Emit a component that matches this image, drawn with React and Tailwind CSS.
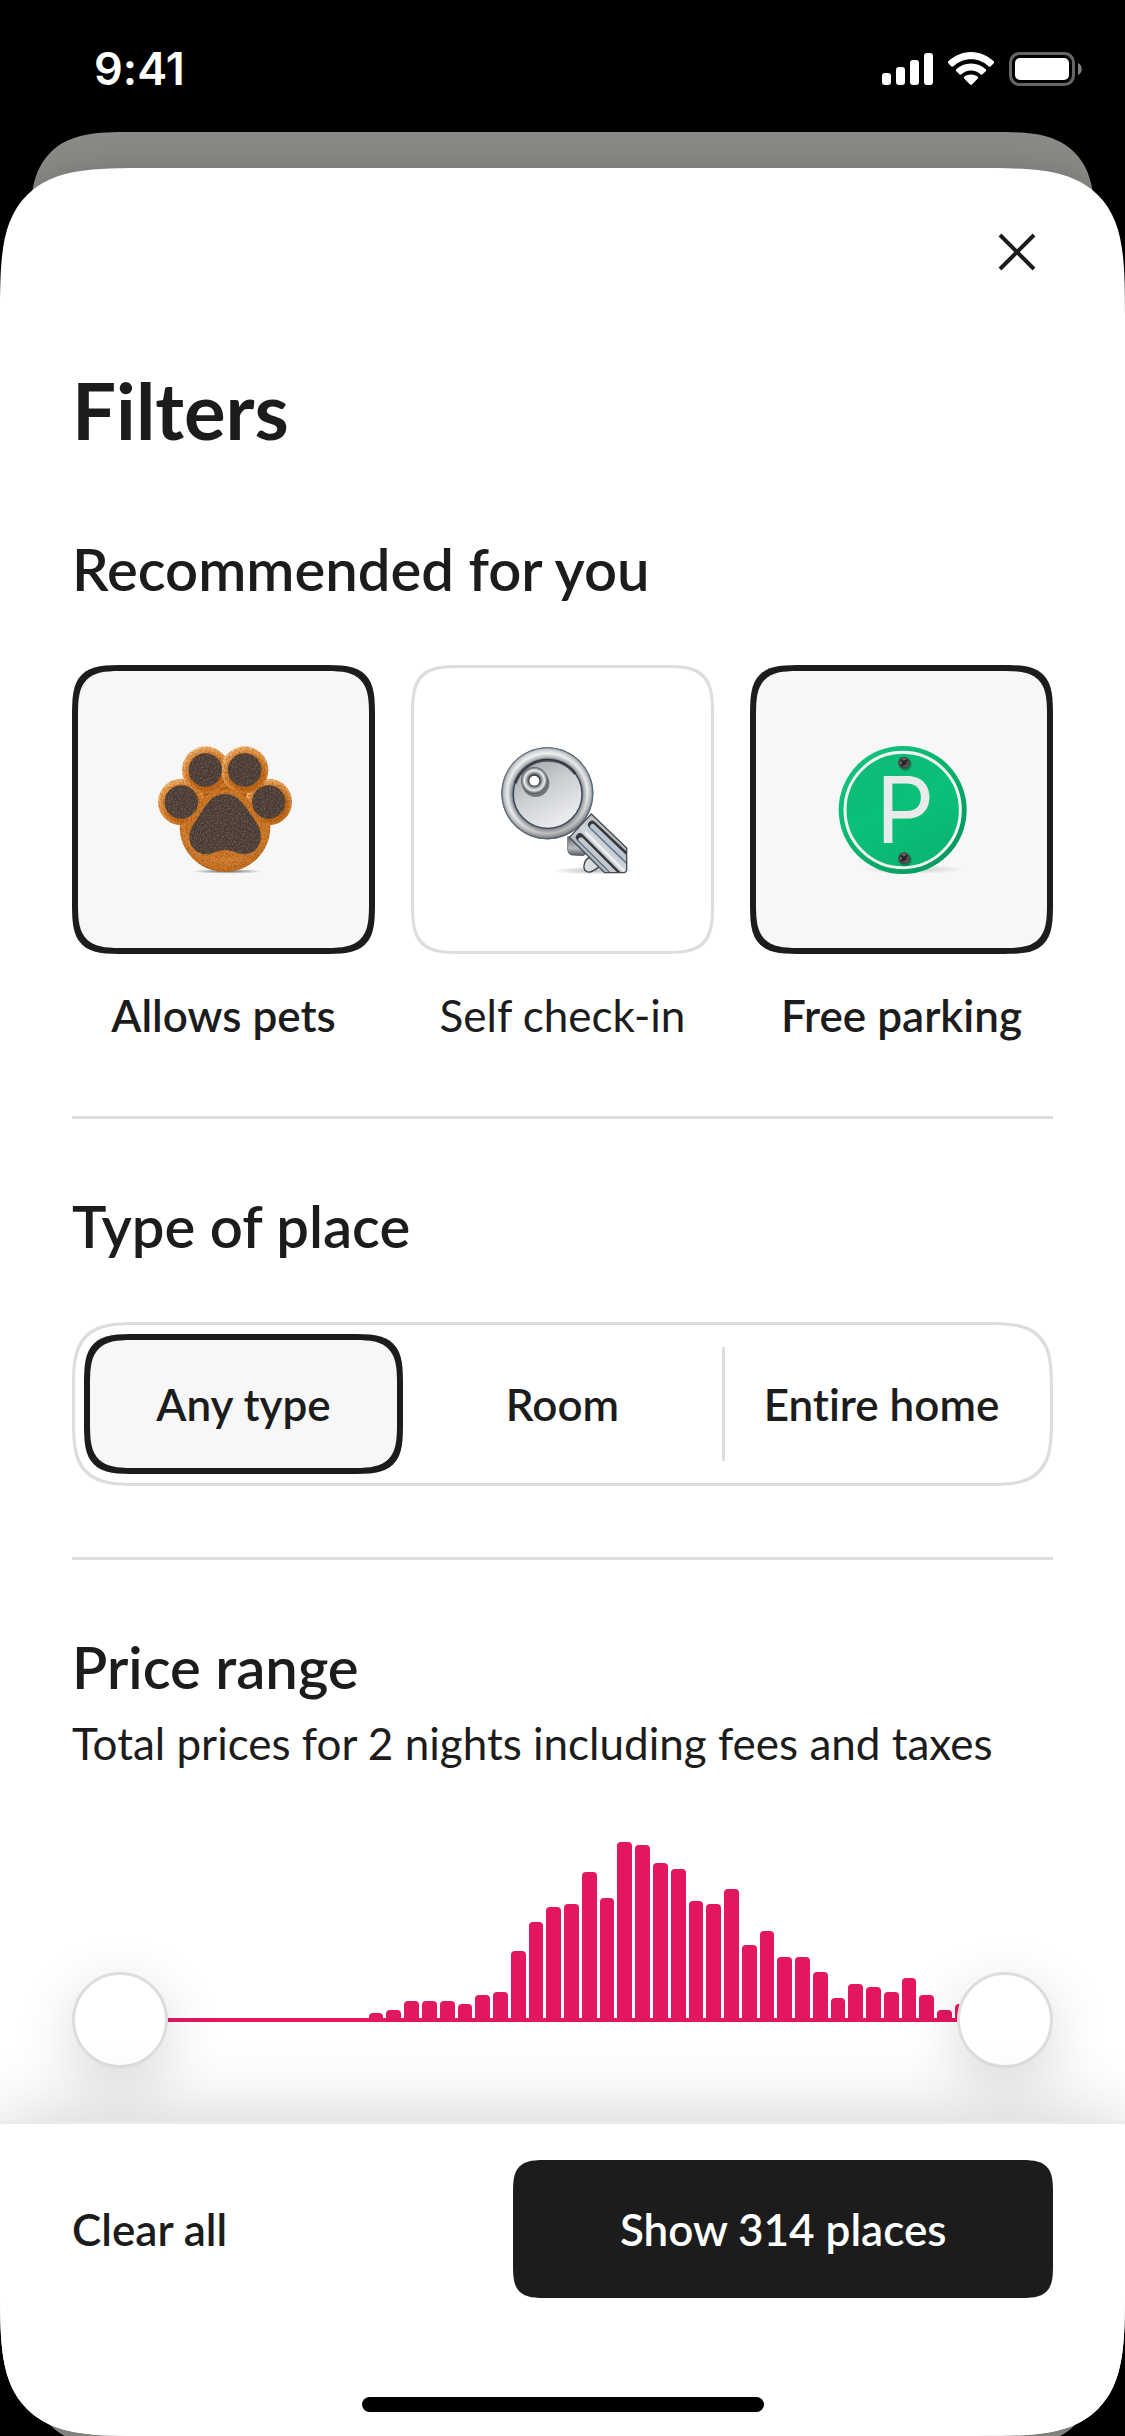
import React, { useState } from "react";
import clsx from "clsx";

const BARS = [
  0, 0, 0, 0, 0, 0, 0, 0, 0, 0, 0, 0, 0, 0,
  9, 12, 21, 21, 21, 18, 27, 30, 71, 100, 115, 118, 150, 124, 180, 177,
  159, 153, 121, 118, 133, 77, 91, 65, 65, 50, 24, 38, 35, 30, 44, 27, 12, 18,
  0, 0,
];

function PawIcon() {
  return (
    <svg viewBox="274 264 432 432" className="size-36" aria-hidden="true">
      <defs>
        <radialGradient id="toe" cx="0.54" cy="0.58" r="0.58">
          <stop offset="0.6" stopColor="#c26a1a" />
          <stop offset="0.8" stopColor="#e39343" />
          <stop offset="1" stopColor="#f8c07c" />
        </radialGradient>
        <radialGradient id="palm" cx="0.48" cy="0.42" r="0.6">
          <stop offset="0.3" stopColor="#b5610f" />
          <stop offset="0.75" stopColor="#d88535" />
          <stop offset="1" stopColor="#c26e20" />
        </radialGradient>
        <radialGradient id="pawShadow">
          <stop offset="0" stopColor="#3d4a52" stopOpacity="0.8" />
          <stop offset="1" stopColor="#3d4a52" stopOpacity="0" />
        </radialGradient>
        <filter id="fur" x="0" y="0" width="1" height="1" colorInterpolationFilters="sRGB">
          <feTurbulence type="fractalNoise" baseFrequency="0.2" numOctaves="2" seed="4" />
          <feColorMatrix values="0 0 0 0 0.4  0 0 0 0 0.17  0 0 0 0 0  1.2 0 0 0 -0.52" result="n" />
          <feComposite in="n" in2="SourceGraphic" operator="in" result="g" />
          <feMerge>
            <feMergeNode in="SourceGraphic" />
            <feMergeNode in="g" />
          </feMerge>
        </filter>
        <filter id="pad" x="0" y="0" width="1" height="1" colorInterpolationFilters="sRGB">
          <feTurbulence type="fractalNoise" baseFrequency="0.22" numOctaves="2" seed="9" />
          <feColorMatrix values="0 0 0 0 0.56  0 0 0 0 0.48  0 0 0 0 0.43  1.4 0 0 0 -0.56" result="n" />
          <feComposite in="n" in2="SourceGraphic" operator="in" result="g" />
          <feMerge>
            <feMergeNode in="SourceGraphic" />
            <feMergeNode in="g" />
          </feMerge>
        </filter>
      </defs>
      <ellipse cx="500" cy="664" rx="105" ry="7" fill="url(#pawShadow)" />
      <g filter="url(#fur)">
        <circle cx="493" cy="530" r="136" fill="url(#palm)" />
        <path d="M400 440L440 410H550L590 440L610 500L380 500Z" fill="#b5600f" />
        <circle cx="362" cy="456" r="70" fill="url(#toe)" />
        <circle cx="624" cy="456" r="70" fill="url(#toe)" />
        <circle cx="435" cy="360" r="71" fill="url(#toe)" />
        <circle cx="552" cy="360" r="71" fill="url(#toe)" />
        <path d="M372 536C385 470 440 418 493 418S600 470 615 536L560 620H430Z" fill="#cf7b29" />
      </g>
      <g fill="#463932" filter="url(#pad)">
        <circle cx="434" cy="360" r="50" />
        <circle cx="552" cy="360" r="50" />
        <circle cx="362" cy="456" r="50" />
        <circle cx="624" cy="456" r="50" />
        <path d="M493 432C522 432 540 450 556 472L588 520C612 556 600 604 560 612C534 616 520 600 493 600S454 616 428 612C388 604 374 560 398 524L430 474C446 450 464 432 493 432Z" />
      </g>
    </svg>
  );
}

function KeyIcon() {
  return (
    <svg viewBox="271 264 432 432" className="size-36" aria-hidden="true">
      <defs>
        <radialGradient id="ring" cx="440" cy="430" r="138" gradientUnits="userSpaceOnUse">
          <stop offset="0.74" stopColor="#4b5058" />
          <stop offset="0.79" stopColor="#a5a9af" />
          <stop offset="0.87" stopColor="#f4f5f7" />
          <stop offset="0.95" stopColor="#b9bdc2" />
          <stop offset="1" stopColor="#4d545c" />
        </radialGradient>
        <linearGradient id="ringShade" x1="0.3" y1="0" x2="0.6" y2="1">
          <stop offset="0" stopColor="#fff" stopOpacity="0.35" />
          <stop offset="0.6" stopColor="#888" stopOpacity="0.06" />
          <stop offset="1" stopColor="#222" stopOpacity="0.35" />
        </linearGradient>
        <linearGradient id="disc" x1="0.2" y1="0" x2="0.75" y2="1">
          <stop offset="0" stopColor="#a3a7ac" />
          <stop offset="0.45" stopColor="#cdd0d3" />
          <stop offset="1" stopColor="#eff0f2" />
        </linearGradient>
        <radialGradient id="eye">
          <stop offset="0.38" stopColor="#2c2f34" />
          <stop offset="0.55" stopColor="#8e9298" />
          <stop offset="0.75" stopColor="#eceef0" />
          <stop offset="1" stopColor="#4c5158" />
        </radialGradient>
        <linearGradient id="blade" x1="0" y1="1" x2="1" y2="0">
          <stop offset="0" stopColor="#7f858c" />
          <stop offset="0.5" stopColor="#d3d6d9" />
          <stop offset="1" stopColor="#8a929b" />
        </linearGradient>
        <linearGradient id="tooth" x1="0" y1="0" x2="0" y2="1">
          <stop offset="0" stopColor="#686c71" />
          <stop offset="0.6" stopColor="#b9bcc0" />
          <stop offset="1" stopColor="#55595e" />
        </linearGradient>
        <radialGradient id="keyShadow">
          <stop offset="0" stopColor="#555" stopOpacity="0.4" />
          <stop offset="1" stopColor="#555" stopOpacity="0" />
        </radialGradient>
        <clipPath id="bladeClip">
          <path d="M572 492L678 594V658Q678 668 668 668H612L506 562Z" />
        </clipPath>
      </defs>
      <ellipse cx="580" cy="662" rx="125" ry="12" fill="url(#keyShadow)" />
      <path d="M501 560V600Q502 612 512 615L548 617L562 606L530 560Z" fill="url(#tooth)" stroke="#4a4e53" strokeWidth="2" />
      <path d="M566 622C552 628 546 648 552 660Q562 672 578 662L598 650Z" fill="#d9dbdd" stroke="#3f4347" strokeWidth="4" />
      <path d="M572 492L678 594V658Q678 668 668 668H612L506 562Z" fill="url(#blade)" />
      <g clipPath="url(#bladeClip)" strokeLinecap="round">
        <path d="M574 524L700 642" stroke="#33383e" strokeWidth="24" />
        <path d="M576 530L700 648" stroke="#bfc4ca" strokeWidth="16" />
        <path d="M568 534L690 652" stroke="#55779a" strokeWidth="4" />
        <path d="M538 562L660 684" stroke="#33383e" strokeWidth="24" />
        <path d="M541 570L660 689" stroke="#c4c8cd" strokeWidth="16" />
        <path d="M533 573L650 690" stroke="#55779a" strokeWidth="4" />
        <path d="M556 548L680 672" stroke="#eef0f2" strokeWidth="7" />
      </g>
      <path d="M572 492L678 594V658Q678 668 668 668H612L506 562Z" fill="none" stroke="#444b53" strokeWidth="4" strokeLinejoin="round" />
      <circle cx="440" cy="430" r="138" fill="url(#ring)" />
      <circle cx="440" cy="430" r="137" fill="url(#ringShade)" stroke="#48617c" strokeWidth="2" />
      <circle cx="441" cy="432" r="103" fill="url(#disc)" stroke="#3c4b5b" strokeWidth="4" />
      <path d="M344 400A103 103 0 0 1 524 372" fill="none" stroke="#2b2e33" strokeWidth="9" strokeOpacity="0.7" />
      <circle cx="405" cy="400" r="41" fill="#26292d" fillOpacity="0.55" />
      <circle cx="401" cy="391" r="40" fill="url(#eye)" />
      <circle cx="401" cy="392" r="15" fill="#fff" />
    </svg>
  );
}

function Screw({ y }) {
  return (
    <g>
      <circle cx="524" cy={y + 5} r="19" fill="#04522f" fillOpacity="0.5" />
      <circle cx="520" cy={y} r="18" fill="#4c4649" />
      <path d={`M511 ${y - 7}L529 ${y + 8}M528 ${y - 9}L513 ${y + 9}`} stroke="#1f1b1e" strokeWidth="5" />
      <path d={`M507 ${y + 2}L513 ${y - 3}M524 ${y + 11}L530 ${y + 4}M517 ${y - 12}L524 ${y - 10}`} stroke="#9a9197" strokeWidth="3" />
    </g>
  );
}

function ParkingIcon() {
  return (
    <svg viewBox="298 264 432 432" className="size-36" aria-hidden="true">
      <defs>
        <linearGradient id="sign" x1="0" y1="0" x2="1" y2="1">
          <stop offset="0" stopColor="#16c884" />
          <stop offset="0.5" stopColor="#06b26c" />
          <stop offset="1" stopColor="#04905a" />
        </linearGradient>
        <linearGradient id="signFace" x1="0.2" y1="0" x2="0.7" y2="1">
          <stop offset="0" stopColor="#0fba76" />
          <stop offset="0.5" stopColor="#0ac078" />
          <stop offset="1" stopColor="#0ab470" />
        </linearGradient>
        <radialGradient id="signShadow">
          <stop offset="0" stopColor="#777" stopOpacity="0.35" />
          <stop offset="1" stopColor="#777" stopOpacity="0" />
        </radialGradient>
      </defs>
      <ellipse cx="545" cy="658" rx="160" ry="14" fill="url(#signShadow)" />
      <circle cx="516" cy="480" r="192" fill="url(#sign)" />
      <circle cx="516" cy="480" r="173" fill="url(#signFace)" stroke="#f1f6f3" strokeWidth="9" />
      <text x="435" y="580" fontFamily="Inter, sans-serif" fontSize="275" fill="#e9ebea">P</text>
      <Screw y={338} />
      <Screw y={625} />
    </svg>
  );
}

function StatusBar() {
  return (
    <header className="flex h-[138px] items-center justify-between pr-[43px] pl-[94px]">
      <time className="font-[Inter,sans-serif] text-[45px] leading-[52px] font-semibold text-white">9:41</time>
      <div className="flex items-center">
        <svg viewBox="0 0 52 34" className="mr-[14px] h-[34px] w-[52px]" fill="#fff" aria-label="Signal">
          <rect x="0" y="21" width="9" height="12" rx="3" />
          <rect x="14" y="15" width="9" height="18" rx="3" />
          <rect x="28" y="8" width="9" height="25" rx="3" />
          <rect x="42" y="1" width="9" height="32" rx="3" />
        </svg>
        <svg viewBox="0 0 46 34" className="mr-[15px] h-[34px] w-[46px]" fill="#fff" aria-label="Wi-Fi">
          <path d="M23 0C32 0 40 4 46 9.500Q46.500 10.500 45.500 11.500L42.500 14.500Q41.500 15 40.500 14.300C36 10 30 7.300 23 7.300S10 10 5.500 14.300Q4.500 15 3.500 14.500L.5 11.500Q-.5 10.500 0 9.500C6 4 14 0 23 0Z" />
          <path d="M23 11.500C29 11.500 34 13.800 38 17.500Q38.500 18.500 37.700 19.300L34.300 22.500Q33.300 23 32.500 22.300C30 20 27 18.500 23 18.500S16 20 13.500 22.300Q12.700 23 11.700 22.500L8.300 19.300Q7.500 18.500 8 17.500C12 13.800 17 11.500 23 11.500Z" />
          <path d="M23 22.500C26 22.500 28.500 23.700 30 25Q30.500 25.800 29.800 26.600L24 32.500Q23 33.200 22 32.500L16.200 26.600Q15.500 25.800 16 25C17.500 23.700 20 22.500 23 22.500Z" />
        </svg>
        <svg viewBox="0 0 73 34" className="h-[34px] w-[73px]" aria-label="Battery">
          <rect x="1.500" y="1.500" width="63" height="31" rx="9" fill="none" stroke="#666" strokeWidth="3" />
          <rect x="6" y="6" width="54" height="22" rx="5" fill="#fff" />
          <path d="M69 11C74 13 74 21 69 23Z" fill="#808080" />
        </svg>
      </div>
    </header>
  );
}

const SECTION_TITLE = "text-[58px] leading-[70px] font-semibold";
const THUMB =
  "pointer-events-none absolute inset-0 m-0 h-full w-full appearance-none bg-transparent [&::-webkit-slider-thumb]:pointer-events-auto [&::-webkit-slider-thumb]:size-24 [&::-webkit-slider-thumb]:appearance-none [&::-webkit-slider-thumb]:rounded-full [&::-webkit-slider-thumb]:border-3 [&::-webkit-slider-thumb]:border-[#dddddd] [&::-webkit-slider-thumb]:bg-white [&::-webkit-slider-thumb]:shadow-[0_18px_60px_rgba(0,0,0,0.16)]";

function RecommendedOption({ label, Icon, checked, onChange }) {
  return (
    <label className="flex cursor-pointer flex-col items-center gap-8">
      <input type="checkbox" className="sr-only" checked={checked} onChange={onChange} />
      <span
        className={clsx(
          "flex h-[289px] w-full items-center justify-center rounded-[54px] [corner-shape:superellipse(1.8)]",
          checked ? "border-6 border-[#1c1c1c] bg-[#f7f7f7]" : "border-3 border-[#dddddd] bg-white"
        )}
      >
        <Icon />
      </span>
      <span className={clsx("text-[44px] leading-[58px] whitespace-nowrap", checked ? "font-semibold" : "font-normal")}>
        {label}
      </span>
    </label>
  );
}

function PlaceOption({ label, checked, divided, onChange }) {
  return (
    <label
      className={clsx(
        "relative flex h-[140px] cursor-pointer items-center justify-center rounded-[54px] text-[44px] leading-[58px] font-semibold whitespace-nowrap [corner-shape:superellipse(1.8)]",
        checked && "border-6 border-[#1c1c1c] bg-[#f7f7f7]"
      )}
    >
      <input type="radio" name="place" className="sr-only" checked={checked} onChange={onChange} />
      {divided && <span className="absolute inset-y-[13px] left-0 w-[3px] bg-[#dddddd]" />}
      {label}
    </label>
  );
}

export default function App() {
  const [picked, setPicked] = useState({ pets: true, checkin: false, parking: true });
  const [place, setPlace] = useState("Any type");
  const [min, setMin] = useState(0);
  const [max, setMax] = useState(100);
  const toggle = (key) => setPicked({ ...picked, [key]: !picked[key] });
  const places = ["Any type", "Room", "Entire home"];

  return (
    <div className="relative flex min-h-screen flex-col overflow-hidden bg-black font-[Lato,sans-serif] text-[#1c1c1c] [font-variant-ligatures:none]">
      <StatusBar />
      <div className="absolute inset-x-[30px] top-[132px] -bottom-[10px] rounded-[100px] bg-[#8b8a86] [corner-shape:superellipse(1.6)]" />
      <div className="relative mt-[30px] flex flex-1 flex-col overflow-hidden rounded-[150px] bg-white shadow-[0_0_36px_rgba(0,0,0,0.16)] [corner-shape:superellipse(1.8)]">
        <main className="flex-1 px-18 pt-12 pb-[99px]">
          <div className="flex justify-end">
            <button type="button" aria-label="Close" className="flex size-18 items-center justify-center">
              <svg viewBox="0 0 36 36" className="size-9 overflow-visible" stroke="#1c1c1c" strokeWidth="4" aria-hidden="true">
                <path d="M1 1L35 35M35 1L1 35" />
              </svg>
            </button>
          </div>
          <h1 className="mt-[76px] text-[78px] leading-[92px] font-bold">Filters</h1>

          <section className="border-b-3 border-[#dddddd] pt-[78px] pb-18">
            <h2 className={SECTION_TITLE}>Recommended for you</h2>
            <div className="mt-[61px] grid grid-cols-3 gap-9">
              <RecommendedOption label="Allows pets" Icon={PawIcon} checked={picked.pets} onChange={() => toggle("pets")} />
              <RecommendedOption label="Self check-in" Icon={KeyIcon} checked={picked.checkin} onChange={() => toggle("checkin")} />
              <RecommendedOption label="Free parking" Icon={ParkingIcon} checked={picked.parking} onChange={() => toggle("parking")} />
            </div>
          </section>

          <section className="border-b-3 border-[#dddddd] pt-18 pb-[71px]">
            <h2 className={SECTION_TITLE}>Type of place</h2>
            <div role="radiogroup" aria-label="Type of place" className="mt-[61px] grid grid-cols-3 rounded-[72px] border-3 border-[#dddddd] p-[9px] [corner-shape:superellipse(1.8)]">
              {places.map((name, i) => (
                <PlaceOption
                  key={name}
                  label={name}
                  checked={place === name}
                  divided={i > 0 && place !== name && place !== places[i - 1]}
                  onChange={() => setPlace(name)}
                />
              ))}
            </div>
          </section>

          <section className="pt-18">
            <h2 className={SECTION_TITLE}>Price range</h2>
            <p className="mt-3 text-[44px] leading-[58px]">Total prices for 2 nights including fees and taxes</p>
            <div className="relative mt-[70px]">
              <div className="mx-12 flex h-[180px] items-end gap-[3px] border-b-4 border-[#e31660]">
                {BARS.map((h, i) => (
                  <div key={i} className="flex-1 rounded-t-[4px] bg-[#e31660]" style={{ height: Math.max(h - 4, 0) }} />
                ))}
              </div>
              <div className="absolute inset-x-0 -bottom-[46px] h-24">
                <input type="range" aria-label="Minimum price" className={THUMB} min="0" max="100" value={min} onChange={(e) => setMin(Math.min(+e.target.value, max))} />
                <input type="range" aria-label="Maximum price" className={THUMB} min="0" max="100" value={max} onChange={(e) => setMax(Math.max(+e.target.value, min))} />
              </div>
            </div>
          </section>
        </main>

        <footer className="relative border-t-3 border-[#ebebeb] bg-white px-18 pt-9 pb-6 shadow-[0_0_72px_rgba(0,0,0,0.2)]">
          <div className="flex items-center justify-between">
            <button type="button" className="text-[44px] leading-[58px] font-semibold">Clear all</button>
            <button type="button" className="h-[138px] w-[55%] rounded-[36px] bg-[#1c1c1c] text-[44px] leading-[58px] font-semibold text-white [corner-shape:superellipse(1.8)]">
              Show 314 places
            </button>
          </div>
          <div className="mx-auto mt-[99px] h-[15px] w-[402px] rounded-full bg-black" />
        </footer>
      </div>
    </div>
  );
}
